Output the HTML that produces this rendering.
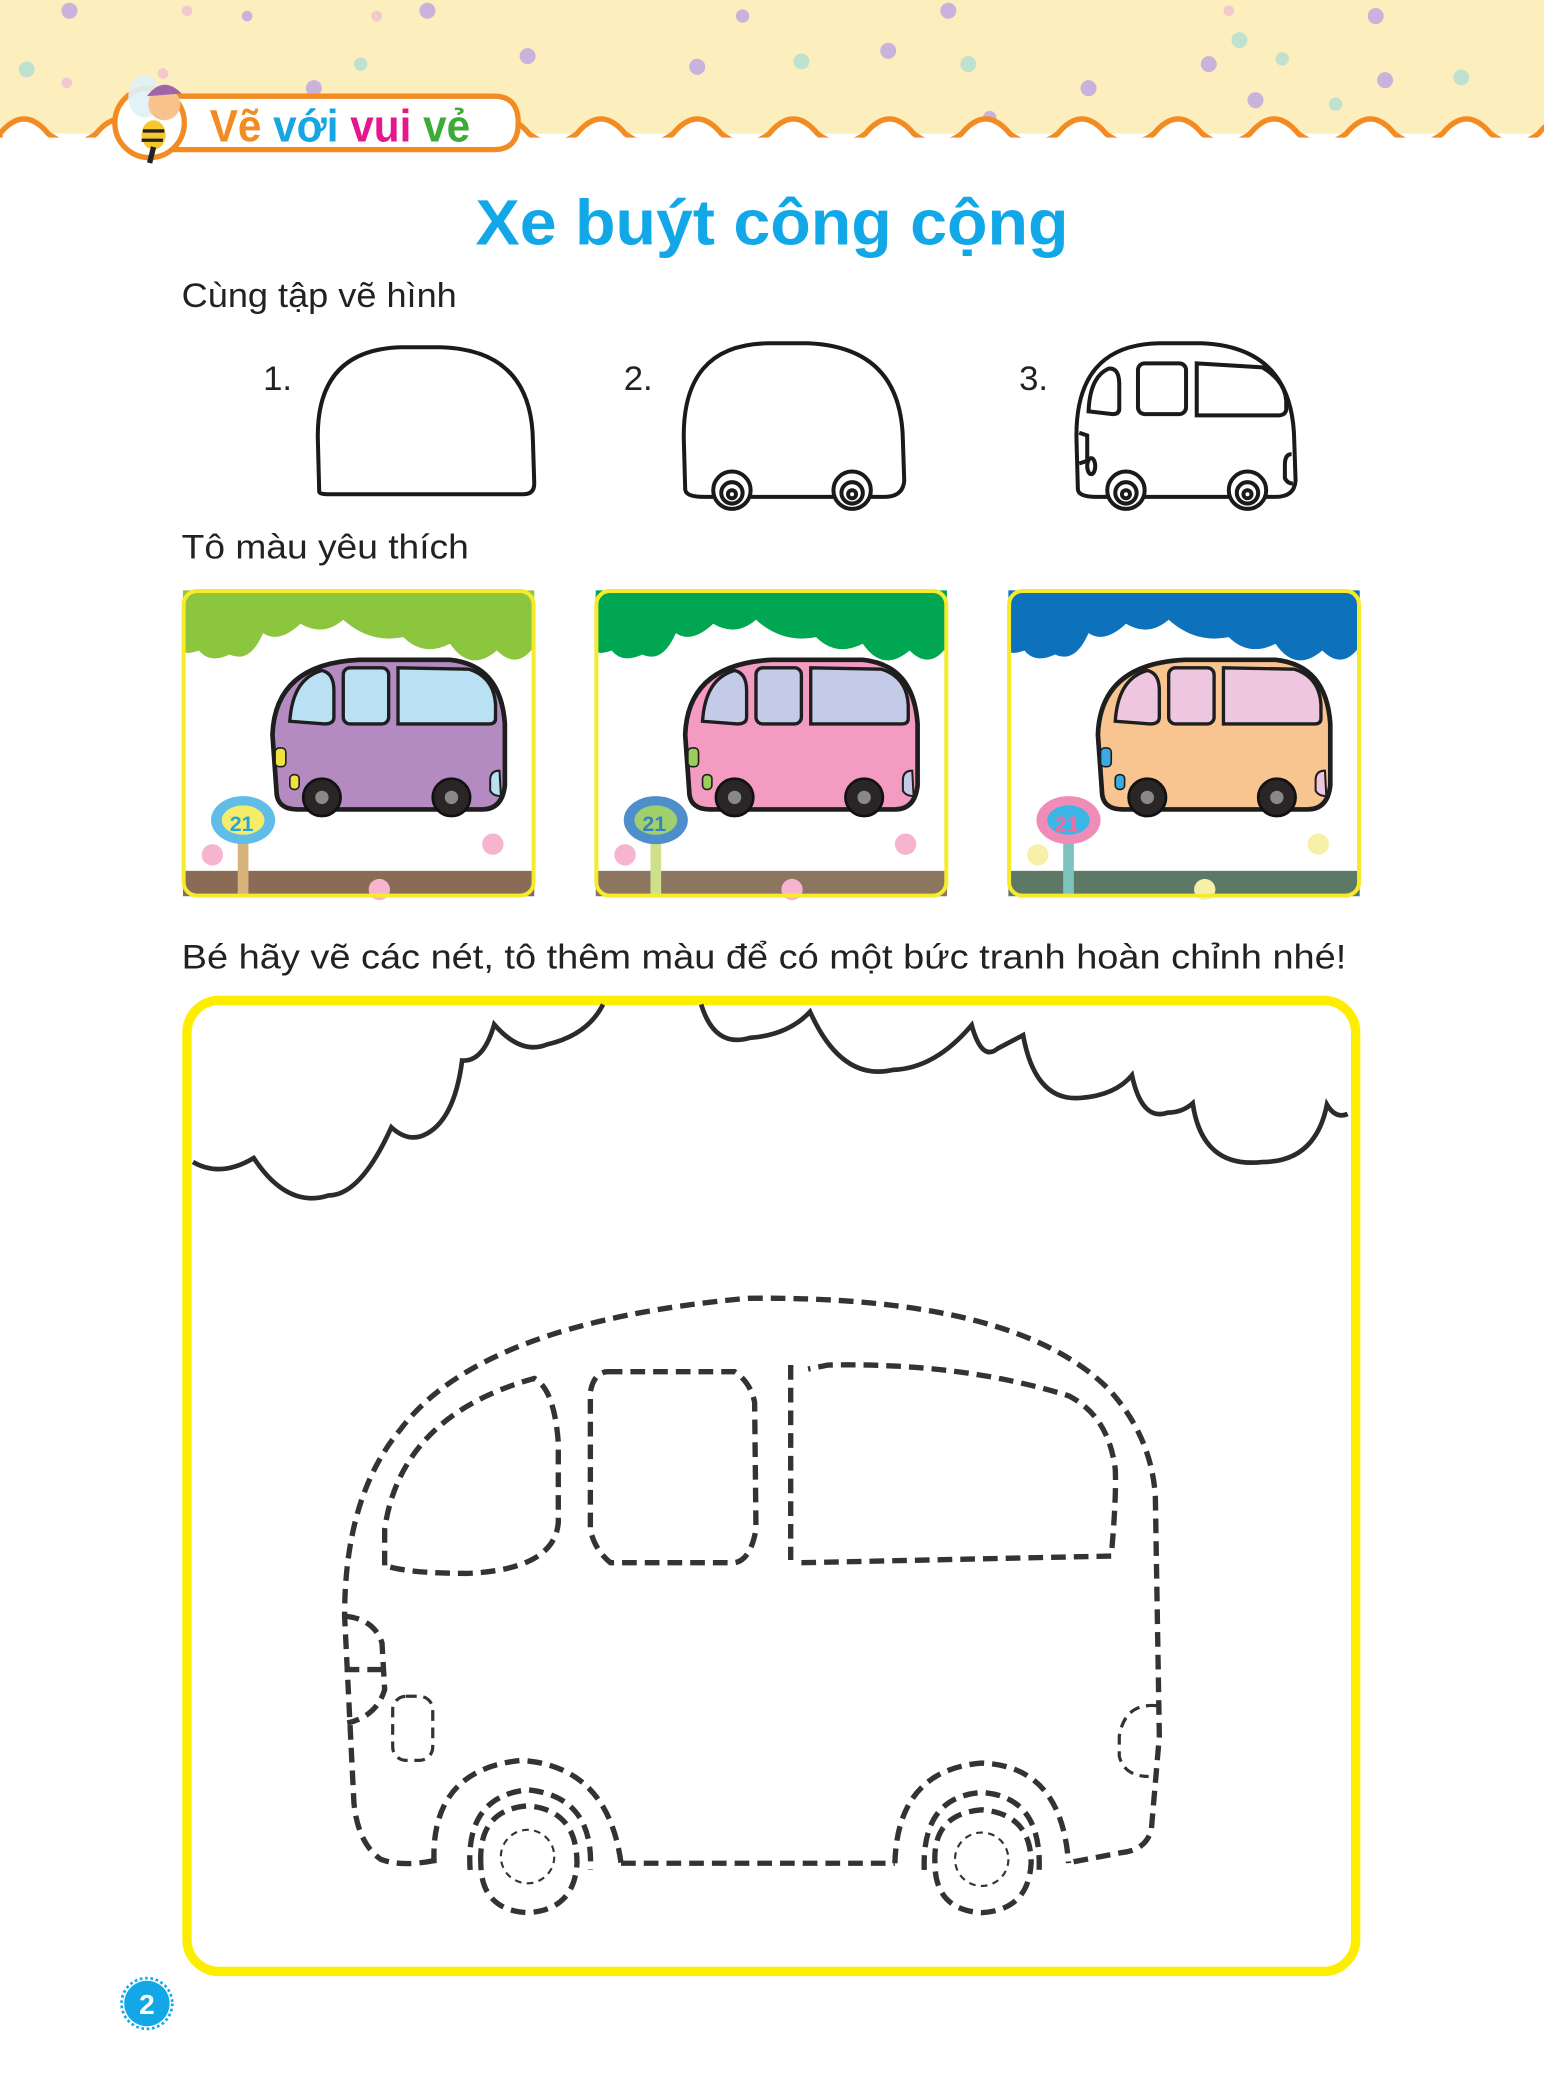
<!DOCTYPE html>
<html><head><meta charset="utf-8"><style>
html,body{margin:0;padding:0;background:#fff}
svg{display:block}
</style></head><body>
<svg width="1544" height="2095" viewBox="0 0 1156 1568.5" xmlns="http://www.w3.org/2000/svg" font-family="Liberation Sans, DejaVu Sans, sans-serif">
<defs>
<g id="pbus">
  <path d="M70,150 L67,108 Q69,55 132,52 L200,52 Q238,56 241,100 L241,146 Q239,164 224,164 L86,164 Q70,164 70,150 Z" fill="var(--b)" stroke="#1e1e1e" stroke-width="3.5"/>
  <path d="M80,98 Q82,66 104,60 Q113,62 113,75 L113,95 Q113,100 106,100 Z" fill="var(--w)" stroke="#1e1e1e" stroke-width="2.5"/>
  <rect x="120" y="58" width="34" height="42" rx="5" fill="var(--w)" stroke="#1e1e1e" stroke-width="2.5"/>
  <path d="M161,58 L214,59 Q233,65 234,86 L234,96 Q234,100 229,100 L161,100 Z" fill="var(--w)" stroke="#1e1e1e" stroke-width="2.5"/>
  <rect x="69" y="118" width="8" height="14" rx="3" fill="var(--l)" stroke="#1e1e1e" stroke-width="1.2"/>
  <rect x="80" y="138" width="7" height="11" rx="3" fill="var(--l)" stroke="#1e1e1e" stroke-width="1.2"/>
  <path d="M237,135 Q230,135 230,142 L230,150 Q232,154 238,154 Z" fill="var(--w)" stroke="#1e1e1e" stroke-width="1.5"/>
  <circle cx="104" cy="155" r="14" fill="#2a2626" stroke="#111" stroke-width="2"/>
  <circle cx="104" cy="155" r="5" fill="#888"/>
  <circle cx="201" cy="155" r="14" fill="#2a2626" stroke="#111" stroke-width="2"/>
  <circle cx="201" cy="155" r="5" fill="#888"/>
</g>
</defs>

<rect x="0" y="0" width="1156" height="100" fill="#fdeebd"/>
<g fill="#c9b3dc">
<circle cx="52" cy="8" r="6"/><circle cx="185" cy="12" r="4"/><circle cx="320" cy="8" r="6"/><circle cx="235" cy="66" r="6"/><circle cx="300" cy="90" r="6"/><circle cx="395" cy="42" r="6"/><circle cx="556" cy="12" r="5"/><circle cx="710" cy="8" r="6"/><circle cx="815" cy="66" r="6"/><circle cx="940" cy="75" r="6"/><circle cx="1030" cy="12" r="6"/><circle cx="905" cy="48" r="6"/><circle cx="1037" cy="60" r="6"/><circle cx="665" cy="38" r="6"/><circle cx="522" cy="50" r="6"/><circle cx="741" cy="88" r="5"/></g>
<g fill="#bfe2cf"><circle cx="20" cy="52" r="6"/><circle cx="270" cy="48" r="5"/><circle cx="600" cy="46" r="6"/><circle cx="725" cy="48" r="6"/><circle cx="928" cy="30" r="6"/><circle cx="1094" cy="58" r="6"/><circle cx="1000" cy="78" r="5"/><circle cx="960" cy="44" r="5"/></g>
<g fill="#f4c8cf"><circle cx="50" cy="62" r="4"/><circle cx="140" cy="8" r="4"/><circle cx="282" cy="12" r="4"/><circle cx="600" cy="92" r="4"/><circle cx="920" cy="8" r="4"/><circle cx="122" cy="55" r="4"/></g>
<path d="M0,100 q18,-22 36,0 q18,14 36,0 q18,-22 36,0 q18,14 36,0 q18,-22 36,0 q18,14 36,0 q18,-22 36,0 q18,14 36,0 q18,-22 36,0 q18,14 36,0 q18,-22 36,0 q18,14 36,0 q18,-22 36,0 q18,14 36,0 q18,-22 36,0 q18,14 36,0 q18,-22 36,0 q18,14 36,0 q18,-22 36,0 q18,14 36,0 q18,-22 36,0 q18,14 36,0 q18,-22 36,0 q18,14 36,0 q18,-22 36,0 q18,14 36,0 q18,-22 36,0 q18,14 36,0 q18,-22 36,0 q18,14 36,0 q18,-22 36,0 q18,14 36,0 q18,-22 36,0 q18,14 36,0 L1160,140 L0,140 Z" fill="#fff" stroke="#f28c22" stroke-width="4"/>
<rect x="0" y="103" width="1156" height="40" fill="#fff"/>
<path d="M112,72 L370,72 Q388,72 388,92 Q388,112 370,112 L112,112 Z" fill="#fff" stroke="#f28c22" stroke-width="4"/>
<circle cx="112" cy="92" r="26" fill="#fff" stroke="#f28c22" stroke-width="4"/>
<ellipse cx="108" cy="72" rx="12" ry="16" fill="#dff1f6" opacity="0.9"/>
<circle cx="123" cy="78" r="12" fill="#f7c28c"/>
<path d="M110,72 Q122,56 136,70 Z" fill="#a264a8"/>
<ellipse cx="115" cy="101" rx="9" ry="11" fill="#f5c92e"/>
<path d="M107,98 L123,98 M106,105 L122,105" stroke="#222" stroke-width="2.5"/>
<path d="M115,110 L112,122" stroke="#222" stroke-width="4"/>
<text x="157" y="106" font-size="34" font-weight="bold" fill="#f28c22" textLength="195" lengthAdjust="spacingAndGlyphs">Vẽ <tspan fill="#15a6e3">với</tspan> <tspan fill="#e5178b">vui</tspan> <tspan fill="#3dab37">vẻ</tspan></text>

<text x="356" y="183" font-size="48" font-weight="bold" fill="#12a8e8" textLength="444" lengthAdjust="spacingAndGlyphs">Xe buýt công cộng</text>
<text x="136" y="230" font-size="26" fill="#222" textLength="206" lengthAdjust="spacingAndGlyphs">Cùng tập vẽ hình</text>

<g fill="none" stroke="#1a1a1a" stroke-width="3">
<path d="M239,368 L238,330 Q236,262 300,260 L330,260 Q398,262 399,330 L400,362 Q400,370 392,370 L245,370 Q239,370 239,368 Z"/>
<path d="M513,366 L512,330 Q510,258 575,257 L605,257 Q675,260 676,330 L677,360 Q676,372 662,372 L527,372 Q513,372 513,366 Z"/>
<circle cx="548" cy="367" r="14" fill="#fff"/><circle cx="548" cy="369" r="8"/><circle cx="548" cy="370" r="3"/>
<circle cx="638" cy="367" r="14" fill="#fff"/><circle cx="638" cy="369" r="8"/><circle cx="638" cy="370" r="3"/>
<path d="M807,366 L806,330 Q804,258 868,257 L900,257 Q968,260 969,330 L970,360 Q969,372 955,372 L821,372 Q807,372 807,366 Z"/>
<path d="M815,308 Q816,282 830,276 Q838,275 838,288 L838,306 Q838,310 833,310 Z"/>
<rect x="852" y="272" width="36" height="38" rx="5"/>
<path d="M896,272 L945,275 Q962,285 963,300 L963,307 Q962,311 957,311 L896,311 Z"/>
<circle cx="843" cy="367" r="14" fill="#fff"/><circle cx="843" cy="369" r="8"/><circle cx="843" cy="370" r="3"/>
<circle cx="934" cy="367" r="14" fill="#fff"/><circle cx="934" cy="369" r="8"/><circle cx="934" cy="370" r="3"/>
<ellipse cx="817" cy="349" rx="3" ry="6"/><path d="M808,324 L814,326 L814,345 L808,347"/>
<path d="M967,340 Q962,340 962,348 L962,358 Q964,362 968,362"/>
</g>
<g font-size="26" fill="#222"><text x="197" y="292">1.</text><text x="467" y="292">2.</text><text x="763" y="292">3.</text></g>

<text x="136" y="418" font-size="26" fill="#222" textLength="215" lengthAdjust="spacingAndGlyphs">Tô màu yêu thích</text>

<g transform="translate(137,442)" style="--b:#b48bc0;--w:#b9e0f3;--l:#f1e03d">
<rect x="0" y="0" width="263" height="229" rx="10" fill="#fff"/>
<path d="M0,0 L263,0 L263,42 Q250,60 235,45 Q215,62 200,40 Q180,50 165,35 Q140,40 120,22 Q105,35 88,25 Q72,40 60,32 Q50,55 35,48 Q20,55 12,45 Q4,48 0,46 Z" fill="#8cc63f"/>
<rect x="0" y="210" width="263" height="19" fill="#8a6b56"/>
<use href="#pbus"/>
<rect x="41" y="180" width="8" height="49" fill="#d8b47c"/>
<ellipse cx="45" cy="172" rx="24" ry="18" fill="#5fbde8"/><ellipse cx="45" cy="172" rx="16" ry="11" fill="#f5ec69"/>
<text x="35" y="180" font-size="16" fill="#2aa5d8" font-weight="bold">21</text>
<circle cx="22" cy="198" r="8" fill="#f6b4cf"/><circle cx="232" cy="190" r="8" fill="#f6b4cf"/><circle cx="147" cy="224" r="8" fill="#f6b4cf"/>
<rect x="0.5" y="0.5" width="262" height="228" rx="10" fill="none" stroke="#f5eb2a" stroke-width="3"/>
</g>
<g transform="translate(446,442)" style="--b:#f39bc1;--w:#c4cbe8;--l:#9acd5a">
<rect x="0" y="0" width="263" height="229" rx="10" fill="#fff"/>
<path d="M0,0 L263,0 L263,42 Q250,60 235,45 Q215,62 200,40 Q180,50 165,35 Q140,40 120,22 Q105,35 88,25 Q72,40 60,32 Q50,55 35,48 Q20,55 12,45 Q4,48 0,46 Z" fill="#00a651"/>
<rect x="0" y="210" width="263" height="19" fill="#8c7660"/>
<use href="#pbus"/>
<rect x="41" y="180" width="8" height="49" fill="#cfe08a"/>
<ellipse cx="45" cy="172" rx="24" ry="18" fill="#4e8fcb"/><ellipse cx="45" cy="172" rx="16" ry="11" fill="#9fd06d"/>
<text x="35" y="180" font-size="16" fill="#3b7fc0" font-weight="bold">21</text>
<circle cx="22" cy="198" r="8" fill="#f6b4cf"/><circle cx="232" cy="190" r="8" fill="#f6b4cf"/><circle cx="147" cy="224" r="8" fill="#f6b4cf"/>
<rect x="0.5" y="0.5" width="262" height="228" rx="10" fill="none" stroke="#f5eb2a" stroke-width="3"/>
</g>
<g transform="translate(755,442)" style="--b:#f8c48f;--w:#efc6df;--l:#3aaae0">
<rect x="0" y="0" width="263" height="229" rx="10" fill="#fff"/>
<path d="M0,0 L263,0 L263,42 Q250,60 235,45 Q215,62 200,40 Q180,50 165,35 Q140,40 120,22 Q105,35 88,25 Q72,40 60,32 Q50,55 35,48 Q20,55 12,45 Q4,48 0,46 Z" fill="#0d72bb"/>
<rect x="0" y="210" width="263" height="19" fill="#5d7966"/>
<use href="#pbus"/>
<rect x="41" y="180" width="8" height="49" fill="#7cc3bd"/>
<ellipse cx="45" cy="172" rx="24" ry="18" fill="#f08cb8"/><ellipse cx="45" cy="172" rx="16" ry="11" fill="#3cb6e6"/>
<text x="35" y="180" font-size="16" fill="#ec6fa3" font-weight="bold">21</text>
<circle cx="22" cy="198" r="8" fill="#f7f0a8"/><circle cx="232" cy="190" r="8" fill="#f7f0a8"/><circle cx="147" cy="224" r="8" fill="#f7f0a8"/>
<rect x="0.5" y="0.5" width="262" height="228" rx="10" fill="none" stroke="#f5eb2a" stroke-width="3"/>
</g>

<text x="136" y="725" font-size="26" fill="#222" textLength="872" lengthAdjust="spacingAndGlyphs">Bé hãy vẽ các nét, tô thêm màu để có một bức tranh hoàn chỉnh nhé!</text>

<rect x="140" y="749" width="875" height="727" rx="24" fill="#fff" stroke="#fdee00" stroke-width="7"/>
<path d="M144.5,870 Q165,882 190,867 Q215,905 246,895 Q270,895 293,844 Q305,855 317,850 Q340,840 346,794 Q362,795 370,767 Q390,790 409.5,782 Q440,775 451.5,752 M525,752 Q535,785 561.5,777 Q590,775 606.5,757.5 Q630,810 668.5,801 Q700,800 727.5,767.5 Q735,795 747,785 L766,775 Q775,825 809,822 Q835,820 847.5,805 Q855,840 874.5,833 Q885,833 893,826 Q900,875 945,870 Q985,870 993.5,827 Q1000,838 1009,834" fill="none" stroke="#2b2b2b" stroke-width="3.5"/>

<g fill="none" stroke="#333" stroke-width="4" stroke-dasharray="11 6" stroke-linecap="butt">
<path d="M325,1393 Q300,1398 285,1392 Q268,1380 265,1350 L258,1210 Q258,1120 300,1070 Q360,990 560,972 Q760,970 830,1040 Q862,1075 865,1120 L868,1300 L862,1370 Q858,1385 840,1387 L798,1395"/>
<path d="M325,1395 Q322,1325 390,1318 Q455,1322 465,1395"/>
<path d="M670,1395 Q672,1325 735,1320 Q795,1322 800,1395"/>
<path d="M465,1395 L670,1395"/>
<path d="M288,1172 L288,1145 Q300,1060 400,1032 Q415,1040 418,1080 L418,1140 Q415,1175 350,1178 Q305,1178 288,1172 Z"/>
<path d="M455,1027 L550,1027 Q562,1035 565,1050 L566,1145 Q562,1168 550,1170 L457,1170 Q445,1160 442,1145 L442,1042 Q445,1027 455,1027 Z"/>
<path d="M592,1022 L592,1168 M600,1170 L832,1165 Q836,1120 835,1100 Q830,1060 800,1045 Q720,1020 620,1022 L605,1025"/>
<path d="M258,1210 Q280,1212 286,1230 L288,1265 Q282,1285 260,1290 M258,1250 L288,1250" />
<rect x="294" y="1270" width="30" height="48" rx="10" stroke-width="2.4" stroke-dasharray="8 5"/>
<path d="M866,1277 Q842,1275 838,1300 L838,1315 Q842,1330 860,1330" stroke-width="2.4" stroke-dasharray="8 5"/>
<path d="M352,1400 Q348,1345 395,1340 Q445,1345 442,1400"/>
<path d="M360,1395 Q358,1355 395,1352 Q432,1355 432,1395 Q430,1430 395,1432 Q360,1430 360,1395"/>
<path d="M692,1400 Q690,1345 735,1342 Q780,1345 778,1400"/>
<path d="M700,1395 Q698,1358 735,1355 Q772,1358 772,1395 Q770,1430 735,1432 Q700,1430 700,1395"/>
<circle cx="395" cy="1390" r="20" stroke-width="1.6" stroke-dasharray="5 4"/>
<circle cx="735" cy="1392" r="20" stroke-width="1.6" stroke-dasharray="5 4"/>
</g>

<circle cx="110" cy="1500" r="17" fill="#12a8e8"/>
<circle cx="110" cy="1500" r="19" fill="none" stroke="#12a8e8" stroke-width="2" stroke-dasharray="2 2"/>
<text x="110" y="1508" font-size="21" font-weight="bold" fill="#fff" text-anchor="middle">2</text>
</svg>
</body></html>
